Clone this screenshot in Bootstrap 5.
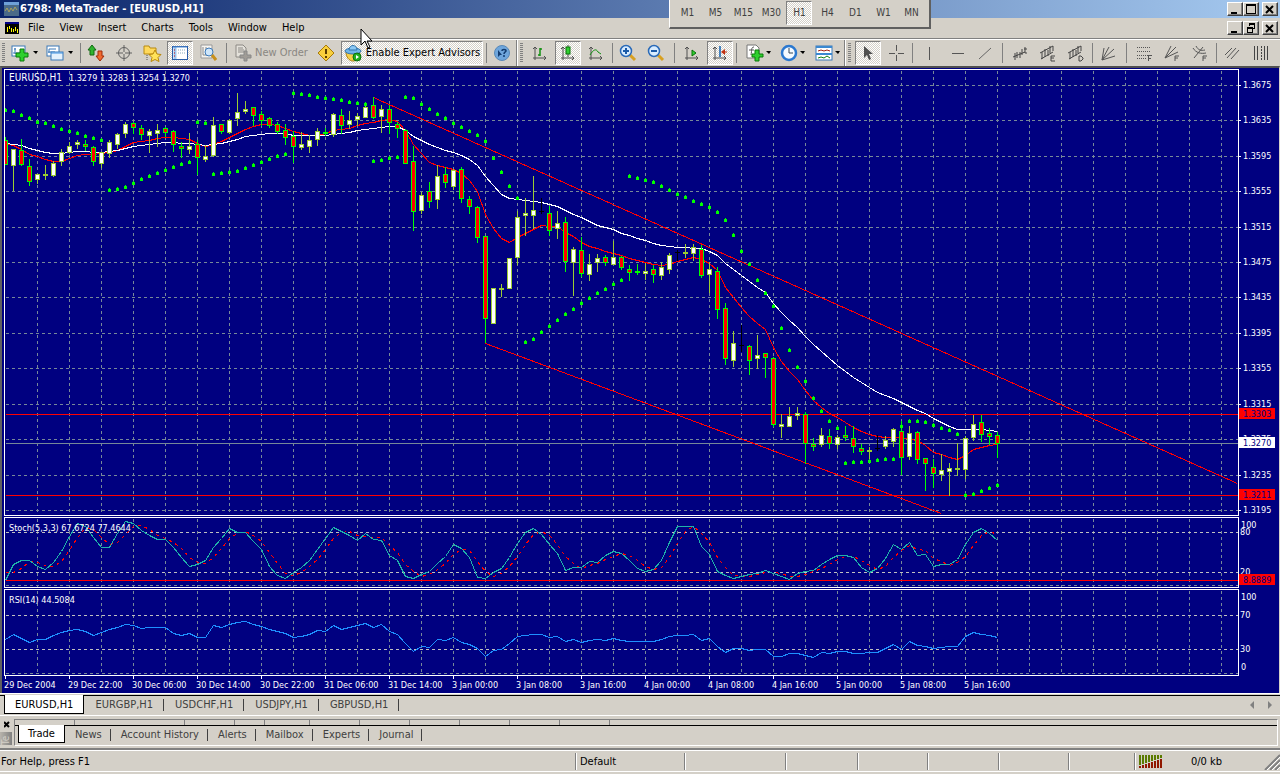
<!DOCTYPE html>
<html lang="en">
<head>
<meta charset="utf-8">
<meta name="viewport" content="width=device-width, initial-scale=1">
<title>6798: MetaTrader - [EURUSD,H1]</title>
<link href="https://cdn.jsdelivr.net/npm/bootstrap@5.3.0/dist/css/bootstrap.min.css" rel="stylesheet">
<style>
  body { background: #d4d0c8; color: #000; font: 11px/14px "DejaVu Sans Condensed", "DejaVu Sans", sans-serif; overflow: hidden; }
  button { background: none; border: 0; padding: 0; color: inherit; font: inherit; line-height: 14px; }
  svg { display: block; flex: none; }

  .titlebar { height: 18px; background: linear-gradient(90deg, #0a246a, #a6caf0); color: #fff; font-weight: bold; }
  .menubar { height: 20px; }
  .menulist button { padding: 0 7px 0 8px; }
  .winbtns { padding-right: 2px; }
  .winbtn { width: 16px; height: 14px; background: #d4d0c8; border: 1px solid; border-color: #fff #404040 #404040 #fff; box-shadow: inset -1px -1px #808080; }
  .winbtn:last-child { margin-left: 3px; }

  .periods { position: absolute; left: 52.3%; top: 0; height: 29px; padding: 0 4px 2px 3px; background: #d4d0c8; border: solid; border-width: 0 2px 2px 1px; border-color: #fff #606060 #606060 #fff; color: #404040; font-size: 10px; z-index: 3; }
  .periods button { width: 28px; height: 24px; }
  .periods button.pressed { width: 26px; margin: 0 1px; }
  .pointer { position: absolute; left: 360px; top: 28px; z-index: 4; pointer-events: none; }

  .toolbars { height: 28px; border-top: 1px solid #808080; box-shadow: inset 0 1px #fff; padding-top: 1px; }
  .toolset { border-right: 1px solid #808080; flex: none; }
  .toolset + .toolset { border-left: 1px solid #fff; }
  .toolset:last-child { border-right: 0; }
  .grip { flex: none; width: 8px; height: 20px; background: repeating-linear-gradient(#808080 0 1px, #d4d0c8 1px 2px) 2px 0 / 3px 20px no-repeat; }
  .tool { flex: none; width: 28px; height: 24px; display: flex; align-items: center; justify-content: center; }
  .tool.drop { width: 35px; justify-content: flex-start; padding-left: 3px; gap: 2px; }
  .tool.drop:last-child { width: 32px; }
  .tool.wide { width: auto; }
  .pressed { border: 1px solid; border-color: #808080 #fff #fff #808080; background: repeating-conic-gradient(#fff 0 25%, #d4d0c8 0 50%) 0 0 / 2px 2px; }
  .tool.pressed { width: 26px; margin: 0 1px; }
  .tool.wide.pressed { width: 142px; gap: 4px; }
  .tool.order { color: #8a8782; width: 82px; justify-content: flex-start; padding-left: 4px; gap: 3px; }
  .bar { flex: none; width: 1px; height: 20px; background: #808080; margin: 0 1px 0 2px; }
  .bar.far { margin: 0 3px 0 4px; }

  .chartwin { background: #000080; border: solid; border-width: 2px 1px 0 2px; border-color: #505050 #d4d0c8 #d4d0c8 #606060; padding: 1px 0 0 2px; color: #fff; font-size: 9px; box-shadow: 0 1px #fff; margin-bottom: 2px; }
  .plot { border: 1px solid #fff; min-width: 0; }
  .plot svg { width: 100%; shape-rendering: crispEdges; }
  .plot text, .scale text { fill: #fff; font-size: 9px; }
  .plot text.symbol { font-size: 10px; }
  .scale { width: 40px; shape-rendering: crispEdges; }
  .pane + .pane { margin-top: 1px; }
  .dates { height: 17px; overflow: hidden; line-height: 12px; }
  .dates span { width: 64px; flex: none; white-space: nowrap; position: relative; padding-top: 3px; }
  .dates span::before { content: ""; position: absolute; left: 1px; top: 0; width: 1px; height: 3px; background: #fff; }

  .sheet { border-top: 1px solid #000; color: #404040; }
  .sheet button { padding: 1px 11px 0; position: relative; }
  .sheet button::after { content: ""; position: absolute; right: 0; top: 3px; height: 12px; width: 1px; background: #404040; }
  .sheet button.current { background: #fff; color: #000; border: 1px solid #000; border-top: 0; height: 18px; padding: 0 10px; margin-top: -1px; }
  .sheet button.current::after { content: none; }
  .charttabs { height: 21px; border-bottom: 1px solid #fff; padding-left: 4px; }
  .charttabs button { height: 17px; }
  .charttabs button.current { height: 19px; padding-top: 1px; }
  .terminal { height: 27px; margin-top: 3px; }
  .termside { width: 14px; }
  .termname { width: 12px; height: 13px; overflow: hidden; background: linear-gradient(90deg, #808080, #b8b4ac); color: #d4d0c8; font-size: 10px; line-height: 12px; writing-mode: vertical-rl; transform: rotate(180deg); }
  .termbody { border: 1px solid; border-color: #808080 #fff #fff #808080; margin-right: 2px; }
  .termhead span { height: 5px; border-right: 1px solid #808080; }
  .termtabs { padding-left: 3px; }
  .termtabs button { padding: 2px 9px 0 10px; }
  .termtabs button.current { height: 18px; padding: 1px 9px 0; }

  .statusbar { height: 24px; margin-top: 2px; border-top: 2px solid #808080; border-bottom: 1px solid #fff; box-shadow: inset 0 1px #fff; }
  .statusbar > div { padding: 0 4px; height: 17px; margin-top: 3px; border-left: 1px solid #808080; box-shadow: inset 1px 0 #fff; display: flex; align-items: center; }
  .statusbar > div:first-child { border: 0; box-shadow: none; padding-left: 1px; }
</style>
</head>
<body>
<header class="titlebar d-flex align-items-center ps-1">
  <svg width="16" height="14" viewBox="0 0 16 14"><rect width="15" height="13" y="1" fill="#4a6a88"/><rect width="15" height="3" fill="#6ea0d8"/><path d="M1 9l2-3 2 4 2-4 2 3 2-4 2 3" fill="none" stroke="#aaa060"/></svg>
  <span class="flex-grow-1">6798: MetaTrader - [EURUSD,H1]</span>
  <div class="winbtns d-flex">
    <button class="winbtn" aria-label="Minimize"><svg width="13" height="11"><path d="M3 9h6" stroke="#000" stroke-width="2"/></svg></button>
    <button class="winbtn" aria-label="Maximize"><svg width="13" height="11" shape-rendering="crispEdges"><path d="M2 0h10v10H2zM3 2v7h8V2z" fill-rule="evenodd"/></svg></button>
    <button class="winbtn" aria-label="Close"><svg width="13" height="11"><path d="M3 2l7 7M10 2l-7 7" stroke="#000" stroke-width="2"/></svg></button>
  </div>
</header>
<nav class="menubar d-flex align-items-center" aria-label="Menu">
  <svg class="ms-1" width="16" height="14" viewBox="0 0 16 14" shape-rendering="crispEdges"><rect x="1" y="1" width="14" height="12" fill="#000"/><path d="M1 2h14" stroke="#008" stroke-width="2"/><path d="M3 6h1v5h-1zM5 5h1v3h-1zM7 7h1v4h-1zM9 8h1v3h-1zM11 6h1v4h-1zM13 8h1v4h-1z" fill="#ff0"/></svg>
  <div class="menulist d-flex flex-grow-1">
    <button class="ps-2">File</button><button>View</button><button>Insert</button><button>Charts</button><button>Tools</button><button>Window</button><button>Help</button>
  </div>
  <div class="winbtns d-flex">
    <button class="winbtn" aria-label="Minimize chart"><svg width="13" height="11"><path d="M3 9h6" stroke="#000" stroke-width="2"/></svg></button>
    <button class="winbtn" aria-label="Restore chart"><svg width="13" height="11" shape-rendering="crispEdges"><path d="M5 0h6v6H9V5h1V2H6v1H5zM3 4h6v6H3zM4 6v3h4V6z" fill-rule="evenodd"/></svg></button>
    <button class="winbtn" aria-label="Close chart"><svg width="13" height="11"><path d="M3 2l7 7M10 2l-7 7" stroke="#000" stroke-width="2"/></svg></button>
  </div>
</nav>

<div class="periods d-flex align-items-center" role="toolbar" aria-label="Periodicity">
  <button>M1</button><button>M5</button><button>M15</button><button>M30</button><button class="pressed">H1</button><button>H4</button><button>D1</button><button>W1</button><button>MN</button>
</div>
<svg class="pointer" width="13" height="22" viewBox="0 0 13 22"><path d="M1 1v16l4-4 3 7 2-1-3-6h5z" fill="#fff" stroke="#000"/></svg>

<div class="toolbars d-flex">
  <div class="toolset d-flex align-items-center">
    <i class="grip"></i>
    <button class="tool drop" aria-label="New chart">
      <svg width="20" height="18" viewBox="0 0 20 18"><rect x="1" y="2" width="13" height="10" fill="#fff" stroke="#3a78b8"/><path d="M4 4v6M2 9h9M3 5h2" stroke="#3a78b8" fill="none"/><path d="M9 5h4v4h4v4h-4v4H9v-4H5V9h4z" fill="#2fd02f" stroke="#0a7a0a"/></svg>
      <svg width="6" height="4"><path d="M0 0h5L3 3z"/></svg></button>
    <button class="tool drop" aria-label="Profiles">
      <svg width="20" height="18" viewBox="0 0 20 18"><rect x="1" y="2" width="12" height="10" fill="#fff" stroke="#3a78b8"/><path d="M3 5v4M2 8h7M3 5h7" stroke="#3a78b8"/><rect x="5" y="8" width="12" height="8" fill="#e4f1fc" stroke="#3a78b8"/><path d="M5 9h12" stroke="#3a90e0"/></svg>
      <svg width="6" height="4"><path d="M0 0h5L3 3z"/></svg></button>
    <i class="bar"></i>
    <button class="tool" aria-label="Market watch"><svg width="18" height="18" viewBox="0 0 18 18"><path d="M5 1l4 5H7v5H3V6H1z" fill="#2fb52f" stroke="#126812"/><path d="M11 7h4v5h2l-4 5-4-5h2z" fill="#f06a30" stroke="#a02a08"/></svg></button>
    <button class="tool" aria-label="Data window"><svg width="18" height="18" viewBox="0 0 18 18" fill="none" stroke="#606060"><circle cx="9" cy="9" r="5.500"/><path d="M9 1v7M9 10v7M1 9h7M10 9h7"/></svg></button>
    <button class="tool" aria-label="Navigator"><svg width="20" height="18" viewBox="0 0 20 18"><path d="M2 2h5l1 2h6v6H2z" fill="#ffd95c" stroke="#b88a10"/><path d="M5 11v5" stroke="#555" stroke-dasharray="1 1"/><path d="M13 6l2 4 4 .5-3 3 1 4-4-2-4 2 1-4-3-3 4-.5z" fill="#ffe25a" stroke="#b8860b"/></svg></button>
    <button class="tool pressed" aria-label="Terminal"><svg width="18" height="16" viewBox="0 0 18 16"><rect x="1.500" y="1.500" width="15" height="13" fill="#fff" stroke="#2a5da8"/><path d="M4 2v12" stroke="#9cc8f0" stroke-width="3"/><path d="M2 2h14" stroke="#4a88d0"/><path d="M3 5h1M3 8h1M3 11h1" stroke="#c00"/><path d="M7 5h7M7 8h7" stroke="#8ab" stroke-dasharray="1 1"/></svg></button>
    <button class="tool" aria-label="Strategy tester"><svg width="18" height="18" viewBox="0 0 18 18"><path d="M2 1h11v13H2z" fill="#f6f4f0" stroke="#999"/><path d="M4 3v8M4 11h7M7 3v3" stroke="#888"/><circle cx="10" cy="8" r="4" fill="#cfe6fa" stroke="#3a78b8"/><path d="M13 11l4 5" stroke="#c8901c" stroke-width="3"/></svg></button>
    <i class="bar far"></i>
    <button class="tool order" disabled><svg width="18" height="18" viewBox="0 0 18 18"><path d="M2 1h7l3 3v9H2z" fill="#e4e1da" stroke="#8c8984"/><path d="M4 4h5M4 6h6M4 8h6" stroke="#8c8984"/><path d="M10 7h3v4h4v3h-4v3h-3v-3H6v-3h4z" fill="#a09c96" stroke="#888"/></svg><span class="text-nowrap">New Order</span></button>
    <button class="tool" aria-label="Options"><svg width="18" height="18" viewBox="0 0 18 18"><path d="M9 1l8 8-8 8-8-8z" fill="#f8cf3c" stroke="#a87a08"/><path d="M9 5v5M9 12v2" stroke="#5a3c00" stroke-width="2"/></svg></button>
    <button class="tool wide pressed"><svg width="18" height="18" viewBox="0 0 18 18"><path d="M2 8c0 5 3 9 7 9s6-3 7-8z" fill="#f4cf48" stroke="#b08010"/><ellipse cx="9" cy="7" rx="8" ry="3" fill="#6fb4e8" stroke="#2f74ac"/><path d="M5 6c0-6 8-6 8 0z" fill="#8cc8f4" stroke="#2f74ac"/><circle cx="13" cy="13" r="4" fill="#22b022" stroke="#0c700c"/><path d="M12 11v4l3-2z" fill="#fff"/></svg><span class="text-nowrap">Enable Expert Advisors</span></button>
    <i class="bar"></i>
    <button class="tool" aria-label="Help"><svg width="18" height="18" viewBox="0 0 18 18"><circle cx="9" cy="9" r="7.500" fill="#6fa6dc" stroke="#5888b8"/><path d="M5 6v7l2-2h2z" fill="#123c70"/><path d="M9 7c0-2 4-2 4 0 0 1-2 1-2 3M11 11v2" fill="none" stroke="#123c70" stroke-width="1.500"/></svg></button>
  </div>
  <div class="toolset d-flex align-items-center">
    <i class="grip"></i>
    <button class="tool" aria-label="Bar chart"><svg width="18" height="18" viewBox="0 0 18 18" fill="none" stroke="#505050"><path d="M4 3v13M2 14h13M2 5l2-2 2 2M13 12l2 2-2 2"/><path d="M9 4v8M9 5h2M7 11h2" stroke="#109010" stroke-width="1.500"/></svg></button>
    <button class="tool pressed" aria-label="Candlesticks"><svg width="18" height="18" viewBox="0 0 18 18" fill="none" stroke="#505050"><path d="M4 3v13M2 14h13M2 5l2-2 2 2M13 12l2 2-2 2M9 1v12"/><rect x="7" y="3" width="4" height="7" fill="#30d030" stroke="#087008"/></svg></button>
    <button class="tool" aria-label="Line chart"><svg width="18" height="18" viewBox="0 0 18 18" fill="none" stroke="#505050"><path d="M4 3v13M2 14h13M2 5l2-2 2 2M13 12l2 2-2 2"/><path d="M3 11c3-5 6-7 8-3l3 2" stroke="#109010"/></svg></button>
    <i class="bar"></i>
    <button class="tool" aria-label="Zoom in"><svg width="18" height="18" viewBox="0 0 18 18"><path d="M10 10l6 6" stroke="#d8a020" stroke-width="3"/><circle cx="7" cy="7" r="5.500" fill="#d8ecff" stroke="#2a6ab8" stroke-width="1.500"/><path d="M4 7h6M7 4v6" stroke="#1a5aa8" stroke-width="2"/></svg></button>
    <button class="tool" aria-label="Zoom out"><svg width="18" height="18" viewBox="0 0 18 18"><path d="M10 10l6 6" stroke="#d8a020" stroke-width="3"/><circle cx="7" cy="7" r="5.500" fill="#d8ecff" stroke="#2a6ab8" stroke-width="1.500"/><path d="M4 7h6" stroke="#1a5aa8" stroke-width="2"/></svg></button>
    <i class="bar far"></i>
    <button class="tool" aria-label="Auto scroll"><svg width="18" height="18" viewBox="0 0 18 18" fill="none" stroke="#505050"><path d="M4 3v13M2 14h13M2 5l2-2 2 2M13 12l2 2-2 2"/><path d="M9 6v6l4-3z" fill="#30d030" stroke="#087008"/></svg></button>
    <button class="tool pressed" aria-label="Chart shift"><svg width="18" height="18" viewBox="0 0 18 18" fill="none" stroke="#505050"><path d="M4 3v13M2 14h13M2 5l2-2 2 2M13 12l2 2-2 2"/><path d="M9 2v11" stroke="#1060b0" stroke-width="1.500"/><path d="M10 8l4-3v6z" fill="#c03010" stroke="none"/><path d="M13 8h3" stroke="#c03010"/></svg></button>
    <i class="bar"></i>
    <button class="tool drop ps-2 me-1" aria-label="Indicators">
      <svg width="18" height="18" viewBox="0 0 18 18"><path d="M1 1h9l3 3v10H1z" fill="#fff" stroke="#777"/><path d="M8 3c-3 0-2 3-3 8M3 6h5" fill="none" stroke="#555"/><path d="M9 6h4v4h4v3h-4v4H9v-4H6v-3h3z" fill="#2fd02f" stroke="#0a7a0a"/></svg>
      <svg width="6" height="4"><path d="M0 0h5L3 3z"/></svg></button>
    <button class="tool drop" aria-label="Periods">
      <svg width="18" height="18" viewBox="0 0 18 18"><circle cx="9" cy="9" r="7" fill="#f4faff" stroke="#2a78d0" stroke-width="2.500"/><path d="M9 4v5h4" fill="none" stroke="#345"/></svg>
      <svg width="6" height="4"><path d="M0 0h5L3 3z"/></svg></button>
    <button class="tool drop" aria-label="Templates">
      <svg width="18" height="18" viewBox="0 0 18 18"><rect x="1" y="2" width="16" height="14" fill="#fff" stroke="#3a78b8"/><path d="M1 3h16M1 10h16" stroke="#3a88d0" stroke-width="2"/><path d="M3 7l3-1 3 1 3-1 3 1" fill="none" stroke="#a02010"/><path d="M3 14l3-1 3 1 3-2 3 2" fill="none" stroke="#108010"/></svg>
      <svg width="6" height="4"><path d="M0 0h5L3 3z"/></svg></button>
  </div>
  <div class="toolset d-flex align-items-center">
    <i class="grip"></i>
    <button class="tool pressed" aria-label="Cursor"><svg width="16" height="18" viewBox="0 0 16 18"><path d="M4 2v12l3-3 2 5 2-1-2-5h4z" fill="#505050"/></svg></button>
    <button class="tool" aria-label="Crosshair"><svg width="18" height="18" shape-rendering="crispEdges" fill="#555"><path d="M9 1h1v6H9zM9 11h1v6H9zM2 9h6v1H2zM11 9h6v1h-6z"/></svg></button>
    <i class="bar"></i>
    <button class="tool" aria-label="Vertical line"><svg width="18" height="18" shape-rendering="crispEdges" fill="#555"><path d="M10 3h1v13h-1z"/></svg></button>
    <button class="tool" aria-label="Horizontal line"><svg width="18" height="18" shape-rendering="crispEdges" fill="#555"><path d="M5 9h12v1H5z"/></svg></button>
    <button class="tool" aria-label="Trendline"><svg width="18" height="18" stroke="#666"><path d="M4 15L16 4"/></svg></button>
    <i class="bar far"></i>
    <button class="tool" aria-label="Channel"><svg width="18" height="18" fill="none" stroke="#444"><path d="M2 13l12-5M4 9v7M6 8v6M9 8v6M11 5v6M14 3v6h2M13 5h3"/></svg></button>
    <button class="tool" aria-label="Equidistant channel"><svg width="18" height="18" fill="none" stroke="#444"><path d="M1 9l13-7M2 15l12-7M3 8v7M6 5v8M9 6v6M11 2v7M14 2v5M12 12v5h4M12 14h3M12 12h4"/></svg></button>
    <button class="tool" aria-label="Deviation channel"><svg width="18" height="18" fill="none" stroke="#444"><path d="M1 9l13-7M2 15l12-7M3 8v7M6 5v8M9 6v6M11 2v7M14 2v5M12 12v5h2l2-2v-1l-2-2z"/></svg></button>
    <i class="bar"></i>
    <button class="tool" aria-label="Gann fan"><svg width="18" height="18" fill="none" stroke="#555"><path d="M3 16L5 4M3 16L10 3M3 16L15 5M3 16l13-4"/></svg></button>
    <i class="bar far"></i>
    <button class="tool" aria-label="Fibonacci retracement"><svg width="18" height="18" fill="none" stroke="#555" shape-rendering="crispEdges"><path d="M2 3h14M2 7h14M2 11h14M2 14h9" stroke-dasharray="1 1"/><path d="M13 17v-6h4M13 14h3"/></svg></button>
    <button class="tool" aria-label="Fibonacci fan"><svg width="18" height="18" fill="none" stroke="#555"><path d="M2 14L8 2M2 14L13 3M2 14l13-6M12 17v-5h4M12 14h3"/></svg></button>
    <button class="tool" aria-label="Fibonacci arcs"><svg width="18" height="18" fill="none" stroke="#555"><path d="M3 14L12 3M2 4c3 5 8 6 13 5M5 2c2 4 5 5 9 4M12 17v-5h4M12 14h3"/></svg></button>
    <i class="bar"></i>
    <button class="tool" aria-label="Parallel lines"><svg width="18" height="18" fill="none" stroke="#555"><path d="M4 14L13 4M8 15L16 6M2 11l7-7"/></svg></button>
    <button class="tool" aria-label="Cycle lines"><svg width="18" height="18" fill="#444" shape-rendering="crispEdges"><path d="M3 2h1v14H3zM6 2h1v14H6zM13 2h1v14h-1zM16 2h1v14h-1z"/><path d="M10 2v14" stroke="#444" stroke-dasharray="2 1"/></svg></button>
  </div>
</div>

<main class="chartwin">
  <div class="pane d-flex"><div class="plot flex-grow-1"><svg id="price" height="445"></svg></div><svg class="scale" id="priceScale" height="447"></svg></div>
  <div class="pane d-flex"><div class="plot flex-grow-1"><svg id="stoch" height="69"></svg></div><svg class="scale" id="stochScale" height="71"></svg></div>
  <div class="pane d-flex"><div class="plot flex-grow-1"><svg id="rsi" height="85"></svg></div><svg class="scale" id="rsiScale" height="87"></svg></div>
  <div class="dates d-flex" id="dates"></div>
</main>

<nav class="sheet charttabs d-flex align-items-start" aria-label="Charts">
  <button class="current">EURUSD,H1</button><button>EURGBP,H1</button><button>USDCHF,H1</button><button>USDJPY,H1</button><button>GBPUSD,H1</button>
  <svg class="ms-auto mt-1 me-1" width="26" height="12"><path d="M4 1v8L0 5zM18 1v8l4-4z" fill="#808080"/></svg>
</nav>

<section class="terminal d-flex">
  <div class="termside">
    <button class="d-block ms-1" aria-label="Close terminal"><svg width="7" height="13"><path d="M0 3l5 5M5 3l-5 5" stroke="#000" stroke-width="2"/></svg></button>
    <div class="termname">Te</div>
  </div>
  <div class="termbody flex-grow-1">
    <div class="termhead d-flex" id="termhead"></div>
    <nav class="sheet termtabs d-flex align-items-start" aria-label="Terminal">
      <button class="current">Trade</button><button>News</button><button>Account History</button><button>Alerts</button><button>Mailbox</button><button>Experts</button><button>Journal</button>
    </nav>
  </div>
</section>

<footer class="statusbar d-flex">
  <div class="flex-grow-1">For Help, press F1</div>
  <div style="width:109px">Default</div><div style="width:101px"></div><div style="width:72px"></div><div style="width:70px"></div><div style="width:71px"></div><div style="width:70px"></div>
  <div style="width:66px"></div>
  <div class="justify-content-between pe-0" style="width:146px">
    <svg id="traffic" width="26" height="13" shape-rendering="crispEdges"></svg><span class="ps-2">0/0 kb</span>
    <svg class="ms-4" width="16" height="17"><path d="M1 17L16 2M6 17L16 7M11 17l5-5" stroke="#808080" stroke-width="2"/><path d="M3 17L16 4M8 17l8-8M13 17l3-3" stroke="#fff"/></svg>
  </div>
</footer>

<script src="https://cdn.jsdelivr.net/npm/bootstrap@5.3.0/dist/js/bootstrap.bundle.min.js"></script>
<script>
const STEP = 8, GRID = '#778899';
const put = (id, html) => { document.getElementById(id).innerHTML = html; };
const hline = (y, color, dash) => `<line x1="0" x2="100%" y1="${y}" y2="${y}" stroke="${color}"${dash ? ' stroke-dasharray="3 3"' : ''}/>`;
const vgrid = h => Array.from({length: 100}, (_, k) => `<line x1="${k * 32 + 32}" x2="${k * 32 + 32}" y1="0" y2="${h}" stroke="${GRID}" stroke-dasharray="3 3"/>`).join('');
const curve = (ys, color, dash) => `<polyline fill="none" stroke="${color}"${dash ? ' stroke-dasharray="3 4"' : ''} points="${ys.map((y, i) => i * STEP + ',' + y).join(' ')}"/>`;
const shift = s => `<g transform="translate(.5 .5)">${s}</g>`;

/* kind, high, body top, body bottom, low */
const candles = `R67,70,95,95 W79,79,96,121 R69,80,95,96 R89,96,112,116 W104,104,110,114 W95,104,106,110 W91,93,106,107 W79,82,92,96 W72,76,83,84 W70,72,75,79
R70,74,77,81 R76,77,92,96 W82,82,94,98 W70,72,84,88 W63,64,75,79 W52,54,64,68 R52,53,58,64 R55,58,65,70 W59,61,66,83 W54,60,64,77
R57,58,63,67 R60,61,75,82 R72,76,79,88 W63,76,80,84 R70,74,88,105 W75,86,90,92 W47,55,86,87 R54,54,62,64 W49,50,63,64 W23,42,49,56
W31,39,42,44 R37,37,46,56 R41,44,51,56 R47,48,56,58 R52,54,62,64 R54,60,68,75 R61,66,77,93 W62,74,78,80 W65,70,77,83 W58,61,70,76
R58,62,64,66 W43,44,65,67 R39,45,56,64 W41,50,55,59 W43,46,50,56 W33,37,48,48 R27,35,48,49 W35,39,47,63 R35,39,53,64 R52,54,59,68
R59,60,94,94 R76,91,142,161 W122,125,141,144 R112,121,132,138 W95,106,130,139 R97,104,113,118 W99,100,117,120 R97,99,129,133 R126,129,137,144 R136,137,168,173
R166,166,249,273 W218,218,254,254 W214,218,220,227 W188,188,219,219 W141,147,188,195 W128,143,146,166 W106,140,146,159 K128,141,142,144 R136,143,161,166 W141,153,159,169
R147,152,192,202 W177,179,193,226 R167,180,204,207 W184,194,205,211 W184,188,193,202 R185,187,193,196 W171,187,195,195 R186,187,198,200 R195,199,203,211 R194,201,203,205
W193,201,204,210 R195,199,205,213 W192,197,206,210 W183,185,200,204 K180,182,183,191 W174,182,184,188 W174,177,184,191 R175,179,206,208 W192,199,205,223 R197,201,240,249
R233,238,289,295 W261,273,291,297 K255,275,276,282 R275,276,291,305 W265,285,289,299 R283,283,288,308 R287,288,355,357 W344,354,357,368 W337,346,357,357 W337,343,346,350
R342,344,374,394 R368,374,377,381 W358,365,375,377 R359,366,374,379 W365,367,375,379 R356,365,368,371 R356,368,377,383 R374,378,382,385 W377,380,382,392 K365,378,379,381
W366,370,377,379 W358,359,372,377 R351,361,388,405 W356,363,387,390 R361,362,390,394 R388,388,394,421 R389,397,404,418 W384,400,405,411 W393,398,402,426 W373,398,400,406
W366,368,400,409 W345,354,368,371 R345,352,365,372 R358,363,367,375 R362,365,374,388`.split(/\s+/);

const sar = [40,41,45,48,52,53,56,59,61,63,66,68,70,120,119,117,113,109,106,103,100,97,94,92,52,53,104,103,102,101,98,95,92,89,86,84,23,24,25,27,
28,29,30,32,33,34,91,90,88,87,27,28,34,39,44,48,53,57,61,65,71,88,102,116,128,272,269,262,256,250,244,239,233,228,223,219,214,210,106,108,
110,112,116,120,124,127,131,134,137,142,150,165,181,194,210,223,236,258,280,297,311,328,341,351,358,393,392,392,391,390,389,389,356,351,351,352,355,358,360,364,425,424,421,418,415];

const slowAverage = [73,74,75,78,80,82,83,83,82,81,81,82,82,81,80,78,76,75,74,73,72,72,73,73,74,75,74,73,71,69,66,65,64,63,63,63,65,65,65,65,
65,64,63,62,60,59,58,57,56,56,60,66,70,74,77,80,82,85,89,95,106,115,124,128,129,130,131,132,134,136,140,144,147,151,155,157,159,163,165,168,
170,173,175,176,177,177,178,178,181,185,193,199,205,211,217,222,233,242,250,257,266,274,281,288,295,301,307,312,317,322,325,328,332,336,340,343,348,352,356,359,359,359,359,360,361];

const fastAverage = [73,75,79,84,86,89,91,91,88,85,84,84,83,82,80,76,72,71,70,68,67,67,68,69,73,76,74,71,67,63,59,56,54,54,55,58,61,63,65,65,
63,60,59,58,55,53,52,50,49,51,60,74,83,92,95,97,99,103,110,121,144,158,168,172,167,163,159,155,156,156,162,166,172,176,178,181,183,185,188,190,
192,194,195,194,191,189,187,189,193,200,217,227,237,246,253,259,277,291,301,309,320,330,337,343,347,352,357,361,364,366,367,367,367,369,370,375,382,384,387,389,385,379,377,375,374];

const stochMain = [62,46,42,42,48,51,44,33,18,5,8,19,29,29,15,3,5,12,17,21,21,29,39,48,46,42,29,20,10,14,14,23,31,48,57,60,54,49,42,31,
20,9,13,17,22,15,21,22,37,42,58,60,56,53,45,38,26,30,39,59,60,54,50,39,25,14,10,16,26,35,52,49,49,43,44,37,33,35,42,50,
53,51,42,24,8,8,8,28,36,53,57,60,58,56,55,52,55,58,61,55,53,52,46,41,37,37,39,49,54,50,40,26,31,24,37,36,48,46,46,41,26,14,10,15,22];

const rsiValues = [49,44,48,52,49,49,45,42,40,39,41,45,42,39,37,34,35,38,37,37,37,43,45,43,47,47,35,37,34,32,31,34,36,39,41,43,47,46,44,40,
41,35,39,37,35,33,37,34,41,44,53,61,56,57,49,50,47,52,54,58,66,60,59,53,46,45,44,44,47,46,51,49,52,50,49,50,48,50,51,51,
51,51,49,46,45,45,44,50,48,56,62,58,58,60,59,59,66,66,63,63,65,67,62,63,61,61,63,63,62,62,58,54,59,51,55,56,58,57,56,56,46,42,44,45,47];

/* the signal line is the three-bar mean of the main line */
const signal = stochMain.map((v, i) => i < 2 ? 54 : Math.round((v + stochMain[i - 1] + stochMain[i - 2]) / 3));

const levels = [15,50,86,121,157,192,227,263,298,334,369,405,440];
const ink = { R: ['#0f0', '#f00'], W: ['#9acd32', '#fff'], K: ['#000', '#000'] };
const drawCandle = (c, i) => {
  const [hi, top, bottom, lo] = c.slice(1).split(',').map(Number), [edge, fill] = ink[c[0]], x = i * STEP;
  return `<rect x="${x}" y="${hi}" width="1" height="${lo - hi}" fill="${edge}"/><rect x="${x - 2}" y="${top}" width="5" height="${bottom - top}" fill="${edge}"/>` +
    (bottom - top > 2 ? `<rect x="${x - 1}" y="${top + 1}" width="3" height="${bottom - top - 2}" fill="${fill}"/>` : '');
};

put('price', shift(levels.map(y => hline(y, GRID, true)).join('') + vgrid(445)
  + hline(344, '#f00') + hline(373, GRID) + hline(425, '#f00')
  + '<path d="M368 27L1232 413M480 273L936 443" stroke="#f00" fill="none"/>'
  + curve(fastAverage, '#f00') + curve(slowAverage, '#fff'))
  + candles.map(drawCandle).join('')
  + sar.map((y, i) => `<path d="M${i * STEP - 1} ${y - 1}h1v-1h1v1h1v3h-3z" fill="#0f0"/>`).join('')
  + '<text class="symbol" x="4" y="11">EURUSD,H1</text><text x="64" y="11">1.3279 1.3283 1.3254 1.3270</text>');
put('stoch', shift(hline(67, GRID, true) + vgrid(69) + hline(14, '#c0c0c0', true) + hline(54, '#c0c0c0', true)
  + hline(62, '#f00') + curve(signal, '#f00', true) + curve(stochMain, '#20b2aa')) + '<text x="4" y="13">Stoch(5,3,3) 67.6724 77.4644</text>');
put('rsi', shift(hline(83, GRID, true) + vgrid(85) + hline(25, '#c0c0c0', true) + hline(59, '#c0c0c0', true)
  + curve(rsiValues, '#1e90ff')) + '<text x="4" y="13">RSI(14) 44.5084</text>');

const label = (x, y, t) => `<text x="${x}" y="${y + 3}">${t}</text>`;
const tag = (y, t, bg) => `<rect x="0" y="${y - 6}" width="36" height="11" fill="${bg}"/><text x="4" y="${y + 3}" style="fill:#000080">${t}</text>`;
put('priceScale', levels.map((y, i) => `<rect y="${y + 1}" width="2" height="1" fill="#fff"/>` + label(4, y + 1, (1.3675 - i * .004).toFixed(4))).join('')
  + tag(345, '1.3303', '#f00') + tag(374, '1.3270', '#fff') + tag(426, '1.3211', '#f00'));
put('stochScale', label(2, 8, '100') + label(1, 15, '80') + label(1, 55, '20') + tag(63, '8.8889', '#f00'));
put('rsiScale', label(2, 8, '100') + label(1, 26, '70') + label(1, 60, '30') + label(2, 78, '0'));

put('dates', ['29 Dec 2004','29 Dec 22:00','30 Dec 06:00','30 Dec 14:00','30 Dec 22:00','31 Dec 06:00','31 Dec 14:00','3 Jan 00:00','3 Jan 08:00','3 Jan 16:00',
  '4 Jan 00:00','4 Jan 08:00','4 Jan 16:00','5 Jan 00:00','5 Jan 08:00','5 Jan 16:00'].map(t => `<span>${t}</span>`).join(''));
put('termhead', [60,110,50,30,45,50,50,50,50,50,50].map(w => `<span style="width:${w}px"></span>`).join(''));
put('traffic', Array.from({length: 8}, (_, i) => `<rect x="${i * 3}" y="0" width="2" height="${10 - i}" fill="#5a7a00"/><rect x="${i * 3}" y="${11 - i}" width="2" height="${2 + i}" fill="#901800"/>`).join(''));
</script>
</body>
</html>
